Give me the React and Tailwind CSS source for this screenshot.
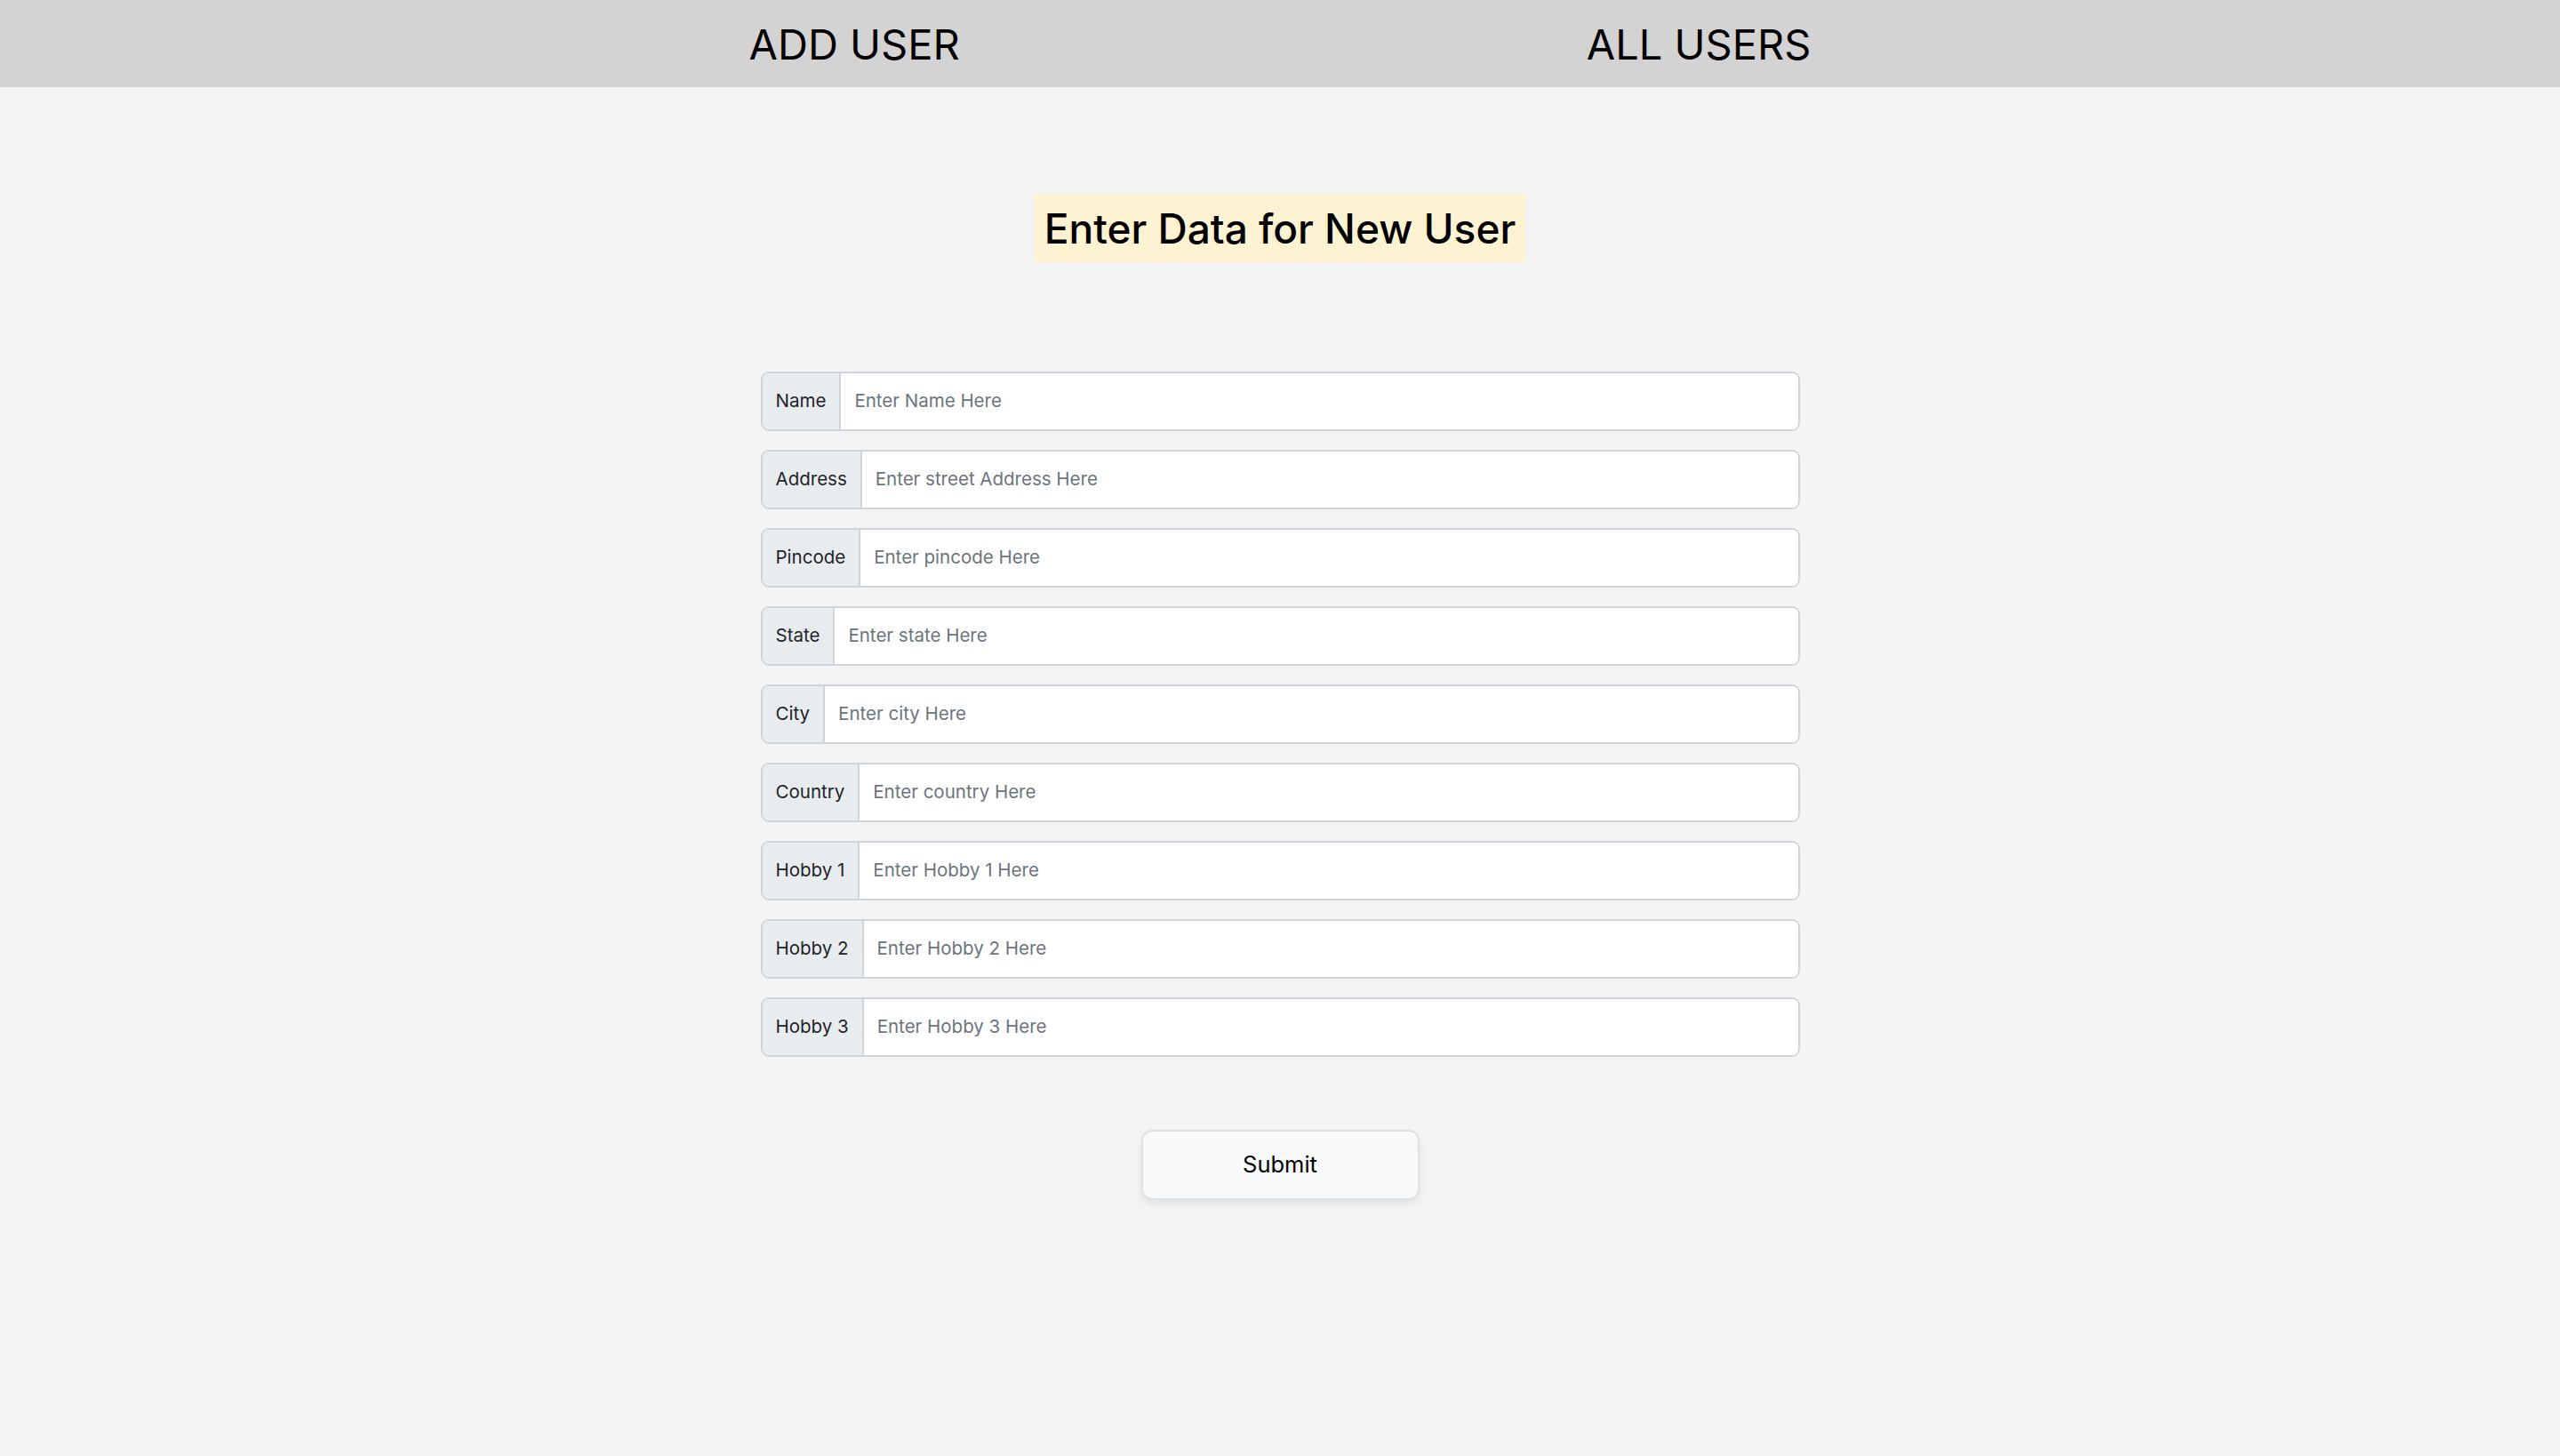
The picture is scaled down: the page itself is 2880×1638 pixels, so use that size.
import React from "react";

const fields = [
  ["Name", "Enter Name Here"],
  ["Address", "Enter street Address Here"],
  ["Pincode", "Enter pincode Here"],
  ["State", "Enter state Here"],
  ["City", "Enter city Here"],
  ["Country", "Enter country Here"],
  ["Hobby 1", "Enter Hobby 1 Here"],
  ["Hobby 2", "Enter Hobby 2 Here"],
  ["Hobby 3", "Enter Hobby 3 Here"],
];

export default function App() {
  return (
    <div
      className="min-h-screen bg-[#f4f4f4] text-black"
      style={{ fontFamily: "Inter, 'Noto Sans', Arial, sans-serif" }}
    >
      <header className="h-[98px] bg-[#d3d3d3] flex items-center">
        <nav className="w-[1900px] mx-auto flex justify-around text-[47px] leading-none">
          <a className="cursor-pointer">ADD USER</a>
          <a className="cursor-pointer">ALL USERS</a>
        </nav>
      </header>
      <main className="flex flex-col items-center">
        <h2 className="mt-[121px] h-[76px] px-[11px] bg-[#fdf2d2] flex items-center text-[46px] font-medium leading-none">
          Enter Data for New User
        </h2>
        <form className="mt-[123px] w-[1169px] flex flex-col gap-[21px]">
          {fields.map(([label, ph]) => (
            <div
              key={label}
              className="h-[67px] flex border-2 border-[#ced4da] rounded-[9px] overflow-hidden bg-white"
            >
              <span className="bg-[#e9ecef] border-r-2 border-[#ced4da] px-[15px] flex items-center text-[20.5px] text-[#212529] whitespace-nowrap">
                {label}
              </span>
              <input
                placeholder={ph}
                className="flex-1 min-w-0 px-[15px] text-[20.5px] text-[#212529] placeholder:text-[#6c757d] outline-none bg-white"
              />
            </div>
          ))}
        </form>
        <button
          type="button"
          className="mt-[82px] w-[313px] h-[79px] bg-[#f8f9fa] border-2 border-[#dee2e6] rounded-[12px] shadow-[0_4px_8px_rgba(0,0,0,0.08)] text-[25.5px] text-black"
        >
          Submit
        </button>
      </main>
    </div>
  );
}
